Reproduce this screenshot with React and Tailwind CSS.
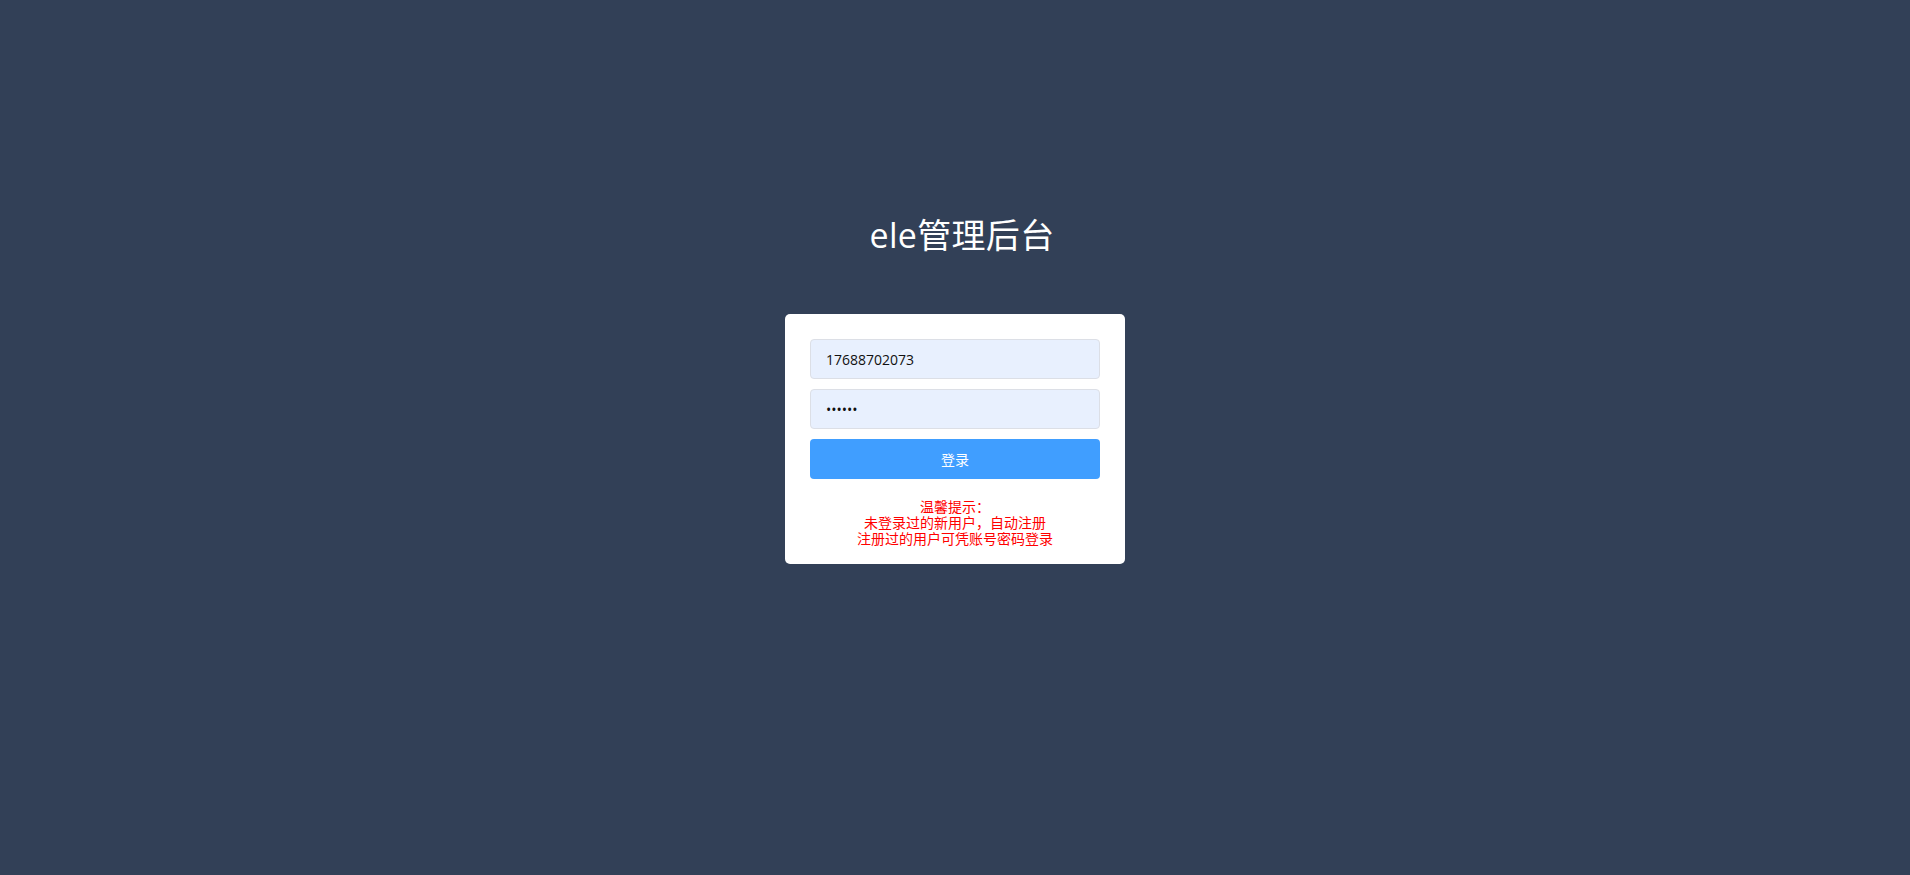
import React from "react";

export default function App() {
  return (
    <div
      className="min-h-screen w-full bg-[#324057] flex flex-col items-center pt-[210px]"
      style={{ fontFamily: '"Open Sans", "Noto Sans CJK SC", sans-serif' }}
    >
      <p className="text-[34px] leading-[51px] text-white pl-[14px] tracking-[0.3px]">ele管理后台</p>

      <div className="mt-[53px] w-[340px] bg-white rounded-[5px] px-[25px] pt-[25px] pb-[17px] text-center">
        <input
          type="text"
          readOnly
          value="17688702073"
          className="block w-full h-[40px] rounded-[4px] border border-[#dcdfe6] bg-[#e8f0fe] px-[15px] text-[14px] text-[#111] outline-none"
        />
        <input
          type="password"
          readOnly
          value="123456"
          className="block mt-[10px] w-full h-[40px] rounded-[4px] border border-[#dcdfe6] bg-[#e8f0fe] px-[15px] text-[14px] text-[#111] outline-none"
        />
        <button className="block mt-[10px] w-full h-[40px] rounded-[4px] bg-[#409eff] text-white text-[14px]">
          登录
        </button>
        <div className="mt-[20px] text-[14px] leading-[16px] text-[#ff0000]">
          <p>温馨提示：</p>
          <p>未登录过的新用户，自动注册</p>
          <p>注册过的用户可凭账号密码登录</p>
        </div>
      </div>
    </div>
  );
}
